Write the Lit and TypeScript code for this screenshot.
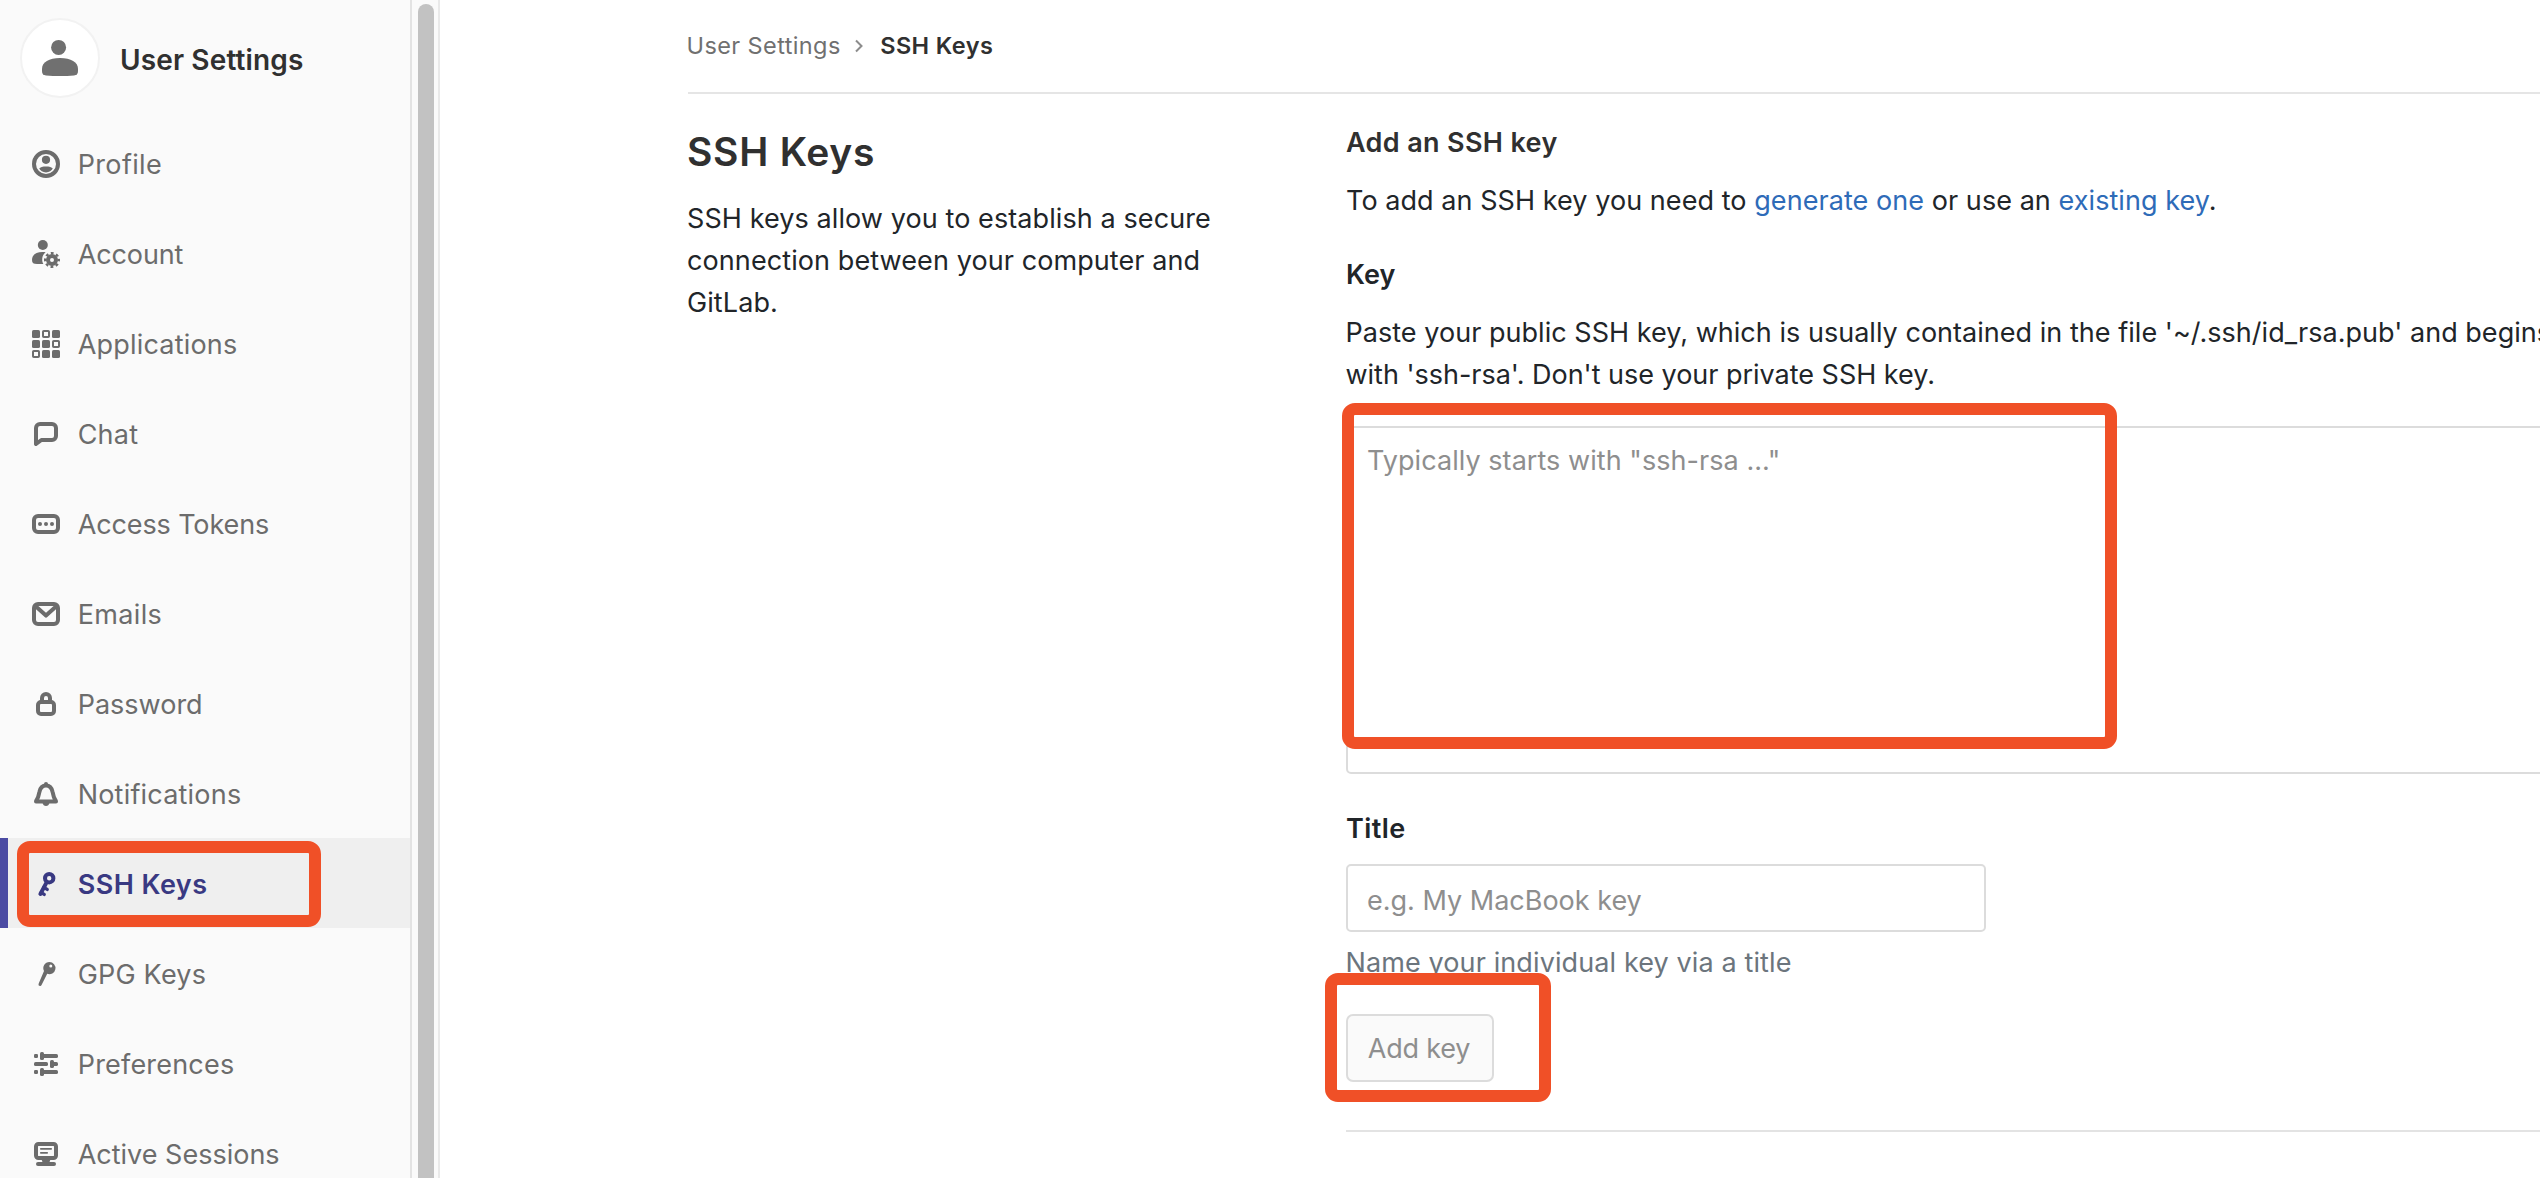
import { LitElement, html, css, svg, type TemplateResult, type SVGTemplateResult } from "lit";
import { customElement } from "lit/decorators.js";
import { classMap } from "lit/directives/class-map.js";

const icons: Record<string, SVGTemplateResult> = {
  profile: svg`
    <circle class="line" cx="8" cy="8" r="6" />
    <circle cx="8" cy="5.9" r="2.05" />
    <path d="M4.6 10.3C5 9.5 6.4 9.2 8 9.2s3 .3 3.4 1.1C10.8 11.5 9.6 12.2 8 12.2s-2.8-.7-3.4-1.9z" />`,
  account: svg`
    <circle cx="6.4" cy="3.5" r="2.5" />
    <path d="M1 11c0-2.6 2-4 5.2-4 .6 0 1.1 0 1.6.1C6.7 8 6.1 9.2 6.1 10.7c0 .9.2 1.6.6 2.3H3.5C1.8 13 1 12.5 1 11z" />
    <circle class="line" cx="11" cy="11" r="2" />
    <circle class="teeth" cx="11" cy="11" r="3.4" />`,
  applications: svg`
    <rect x="1" y="1" width="4" height="4" rx=".8" />
    <rect class="thin" x="6.5" y="1.5" width="3" height="3" rx=".4" />
    <rect x="11" y="1" width="4" height="4" rx=".8" />
    <rect x="1" y="6" width="4" height="4" rx=".8" />
    <rect x="6" y="6" width="4" height="4" rx=".8" />
    <rect class="thin" x="11.5" y="6.5" width="3" height="3" rx=".4" />
    <rect class="thin" x="1.5" y="11.5" width="3" height="3" rx=".4" />
    <rect x="6" y="11" width="4" height="4" rx=".8" />
    <rect x="11" y="11" width="4" height="4" rx=".8" />`,
  chat: svg`<path class="line" d="M3 13V5a2 2 0 0 1 2-2h6a2 2 0 0 1 2 2v4a2 2 0 0 1-2 2H5.7z" />`,
  token: svg`
    <rect class="line" x="2" y="4" width="12" height="8" rx="2" />
    <circle cx="5" cy="8" r="1" /><circle cx="8" cy="8" r="1" /><circle cx="11" cy="8" r="1" />`,
  mail: svg`
    <rect class="line" x="2" y="3" width="12" height="10" rx="2" />
    <path class="line" d="M2.7 4 8 8.8 13.3 4" />`,
  lock: svg`
    <rect class="line" x="4" y="7" width="8" height="6" rx="1.5" />
    <path class="line" d="M6 7V5a2 2 0 0 1 4 0v2" />`,
  bell: svg`
    <path class="line" d="M8 3.8c-2 0-2.9 1.3-3.3 3.2L4.1 9.4C3.8 10.5 3 11 3 11.8h10c0-.8-.8-1.3-1.1-2.4L11.3 7C10.9 5.1 10 3.8 8 3.8z" />
    <circle cx="8" cy="3" r="1" />
    <path d="M6.3 12.5h3.4C9.5 13.5 8.9 14 8 14s-1.5-.5-1.7-1.5z" />`,
  key: svg`
    <circle class="line" cx="9.6" cy="5.1" r="2.1" />
    <path class="line" d="M8.3 7.2 5.2 13" />
    <path class="tooth" d="M6.9 9.7l1.7 1M5.6 12.3l1.5.9" />`,
  gpg: svg`
    <path fill-rule="evenodd" d="M9.7 2a3.05 3.05 0 1 1-1.1 5.9L5.9 13.2c-.3.7-.8.9-1.3.7-.4-.2-.4-.8-.2-1.3L7 6.5A3.05 3.05 0 0 1 9.7 2zm.7 1.3a.75.75 0 1 0 0 1.5.75.75 0 0 0 0-1.5z" />`,
  sliders: svg`
    <rect x="2" y="3" width="2" height="2" rx=".6" /><rect x="5" y="2" width="2" height="4" rx=".8" /><rect x="6" y="3" width="8" height="2" rx=".8" />
    <rect x="2" y="7" width="7" height="2" rx=".8" /><rect x="10" y="6" width="2" height="4" rx=".8" /><rect x="11" y="7" width="3" height="2" rx=".8" />
    <rect x="2" y="11" width="2" height="2" rx=".6" /><rect x="5" y="10" width="2" height="4" rx=".8" /><rect x="6" y="11" width="8" height="2" rx=".8" />`,
  monitor: svg`
    <rect class="line" x="3" y="3" width="10" height="7" rx="1.2" />
    <rect x="5" y="5" width="6" height=".9" rx=".4" /><rect x="5" y="7" width="4" height=".9" rx=".4" />
    <path d="M5.8 10.8h4.4l-.6 1.7H6.4z" /><rect x="3" y="12" width="10" height="2" rx="1" />`,
};

interface NavItem {
  label: string;
  icon: string;
  active?: boolean;
  spacing?: "tight" | "even" | "loose";
}

const navItems: NavItem[] = [
  { label: "Profile", icon: "profile", spacing: "loose" },
  { label: "Account", icon: "account", spacing: "tight" },
  { label: "Applications", icon: "applications" },
  { label: "Chat", icon: "chat" },
  { label: "Access Tokens", icon: "token", spacing: "tight" },
  { label: "Emails", icon: "mail", spacing: "loose" },
  { label: "Password", icon: "lock", spacing: "even" },
  { label: "Notifications", icon: "bell" },
  { label: "SSH Keys", icon: "key", active: true },
  { label: "GPG Keys", icon: "gpg" },
  { label: "Preferences", icon: "sliders" },
  { label: "Active Sessions", icon: "monitor", spacing: "even" },
];

@customElement("settings-sidebar")
export class SettingsSidebar extends LitElement {
  static styles = css`
    :host {
      display: flex;
      flex: none;
      width: 440px;
      height: 1178px;
      box-sizing: border-box;
      overflow: hidden;
      background: #fafafa;
      border-right: 2px solid #e9e9e9;
      position: relative;
    }
    .panel {
      width: 410px;
      flex: none;
      border-right: 2px solid #e3e3e3;
    }
    .head {
      display: flex;
      align-items: center;
      gap: 20px;
      padding: 18px 0 20px 20px;
    }
    .avatar {
      display: flex;
      align-items: center;
      justify-content: center;
      width: 80px;
      height: 80px;
      box-sizing: border-box;
      border: 2px solid #f2f2f2;
      border-radius: 50%;
      background: #fff;
      color: #707070;
    }
    .avatar svg { width: 40px; height: 40px; fill: currentColor; }
    .name {
      padding-top: 4px;
      font-size: 28px;
      line-height: 34px;
      font-weight: 600;
      letter-spacing: 0.13px;
      color: #303030;
    }
    .item {
      display: flex;
      align-items: center;
      gap: 15.7px;
      height: 90px;
      box-sizing: border-box;
      padding-left: 30px;
      color: #6c6c6c;
    }
    .item.active {
      padding-left: 22px;
      border-left: 8px solid #4b4ba3;
      background: #efefef;
      color: #393982;
    }
    .label {
      padding-top: 4px;
      font-size: 27px;
      line-height: 42px;
      letter-spacing: 0.2px;
      white-space: nowrap;
    }
    .tight .label { letter-spacing: -0.12px; }
    .even .label { letter-spacing: 0; }
    .loose .label { letter-spacing: 0.35px; }
    .active .label { font-weight: 600; letter-spacing: 0.45px; }
    .icon { width: 32px; height: 32px; margin-top: 2px; fill: currentColor; flex: none; }
    .line { fill: none; stroke: currentColor; stroke-width: 2; stroke-linecap: round; stroke-linejoin: round; }
    .thin { fill: none; stroke: currentColor; stroke-width: 1; }
    .tooth { fill: none; stroke: currentColor; stroke-width: 1.7; stroke-linecap: round; }
    .teeth { fill: none; stroke: currentColor; stroke-width: 1.2; stroke-dasharray: 1.4 1.27; stroke-dashoffset: 0.7; }
    .track { flex: 1; padding: 4px 4px 0 6px; }
    .thumb { height: 1190px; border-radius: 8px; background: #c2c2c2; }
    .mark {
      position: absolute;
      left: 17px;
      top: 841px;
      width: 304px;
      height: 86px;
      box-sizing: border-box;
      border: 12px solid #f05027;
      border-radius: 13px;
    }
  `;

  private renderItem(item: NavItem): TemplateResult {
    const classes = {
      item: true,
      active: !!item.active,
      tight: item.spacing === "tight",
      even: item.spacing === "even",
      loose: item.spacing === "loose",
    };
    return html`<div class=${classMap(classes)}>
      <svg class="icon" viewBox="0 0 16 16">${icons[item.icon]}</svg>
      <span class="label">${item.label}</span>
    </div>`;
  }

  render() {
    return html`
      <div class="panel">
        <div class="head">
          <div class="avatar">
            <svg viewBox="0 0 40 40">
              <circle cx="18.6" cy="9.4" r="7.5" />
              <path d="M2 31c0-7 7-11 18-11s18 4 18 11v2c0 3-1.5 4-4 4.4-9 .8-19 .8-28 0C3.5 37 2 36 2 33z" />
            </svg>
          </div>
          <span class="name">User Settings</span>
        </div>
        ${navItems.map((item) => this.renderItem(item))}
      </div>
      <div class="track"><div class="thumb"></div></div>
      <div class="mark"></div>
    `;
  }
}

@customElement("app-root")
export class AppRoot extends LitElement {
  static styles = css`
    :host {
      display: flex;
      position: relative;
      width: 100%;
      height: 1178px;
      overflow: hidden;
      background: #fff;
      color: #212529;
      font-family: Inter, "Liberation Sans", sans-serif;
      font-size: 27px;
      line-height: 42px;
      letter-spacing: 0.09px;
    }
    main { flex: 1; min-width: 0; padding-left: 248px; }
    .crumbs {
      display: flex;
      align-items: center;
      height: 92px;
      border-bottom: 2px solid #e5e5e5;
      font-size: 23.5px;
      line-height: 30px;
      letter-spacing: 0.4px;
      color: #707070;
    }
    .crumbs span { margin-left: -1.5px; }
    .crumbs svg { width: 8px; height: 14px; margin: 0 17px 0 14.5px; fill: none; stroke: #8c8c8c; stroke-width: 2; }
    .crumbs b { font-weight: 600; color: #303030; }
    .columns { display: grid; grid-template-columns: 658px 1300px; white-space: nowrap; }
    .about { padding-top: 34px; margin-left: -1px; }
    h4, h5, p { margin: 0; }
    h4 { font-size: 39px; line-height: 48px; font-weight: 600; letter-spacing: 0.75px; color: #303030; }
    .about p { margin-top: 22px; }
    .form { display: flex; flex-direction: column; align-items: flex-start; padding-top: 32px; }
    h5 { font-size: 27px; line-height: 34px; font-weight: 600; letter-spacing: 0.35px; color: #303030; }
    .intro { margin-top: 20px; letter-spacing: 0.06px; }
    a { color: #2e6bb8; }
    label { font-weight: 600; letter-spacing: 0; }
    .key-label { margin-top: 32px; }
    .note { margin-top: 16px; letter-spacing: 0.03px; margin-left: -0.5px; }
    .note span { letter-spacing: -0.02px; }
    textarea, input {
      box-sizing: border-box;
      display: block;
      border: 2px solid #dcdcdc;
      border-radius: 5px;
      background: #fff;
      font: inherit;
      outline: none;
      resize: none;
      overflow: hidden;
    }
    textarea { width: 1300px; height: 348px; margin-top: 30px; padding: 12px 19px; letter-spacing: 0.05px; }
    input { width: 640px; height: 68px; margin-top: 14px; padding: 5px 19px 0; letter-spacing: 0; }
    ::placeholder { color: #8e8e8e; opacity: 1; }
    .title-label { margin-top: 34px; letter-spacing: 0.4px; }
    .help { margin-top: 10px; margin-left: -0.5px; color: #6c757d; letter-spacing: 0.11px; }
    button {
      width: 148px;
      height: 68px;
      box-sizing: border-box;
      margin-top: 30px;
      padding: 2px 2px 0 0;
      border: 2px solid #dcdcdc;
      border-radius: 7px;
      background: #fafafa;
      color: #8e8e8e;
      font: inherit;
      letter-spacing: -0.2px;
    }
    .rule { align-self: stretch; height: 2px; margin-top: 48px; background: #e3e3e3; }
    .mark { position: absolute; box-sizing: border-box; border: 12px solid #f05027; border-radius: 13px; }
    .mark-key { left: 1342px; top: 403px; width: 775px; height: 346px; }
    .mark-add { left: 1325px; top: 973px; width: 226px; height: 129px; }
  `;

  render() {
    return html`
      <settings-sidebar></settings-sidebar>
      <main>
        <nav class="crumbs">
          <span>User Settings</span>
          <svg viewBox="0 0 8 14"><path d="M1 1.5 6.5 7 1 12.5" /></svg>
          <b>SSH Keys</b>
        </nav>
        <div class="columns">
          <section class="about">
            <h4>SSH Keys</h4>
            <p>SSH keys allow you to establish a secure<br />connection between your computer and<br />GitLab.</p>
          </section>
          <section class="form">
            <h5>Add an SSH key</h5>
            <p class="intro">To add an SSH key you need to <a>generate one</a> or use an <a>existing key</a>.</p>
            <label class="key-label">Key</label>
            <p class="note">Paste your public SSH key, which is usually contained in the file '~/.ssh/id_rsa.pub' and begins<br /><span>with 'ssh-rsa'. Don't use your private SSH key.</span></p>
            <textarea placeholder='Typically starts with "ssh-rsa ..."'></textarea>
            <label class="title-label">Title</label>
            <input placeholder="e.g. My MacBook key" />
            <p class="help">Name your individual key via a title</p>
            <button disabled>Add key</button>
            <div class="rule"></div>
          </section>
        </div>
      </main>
      <div class="mark mark-key"></div>
      <div class="mark mark-add"></div>
    `;
  }
}
